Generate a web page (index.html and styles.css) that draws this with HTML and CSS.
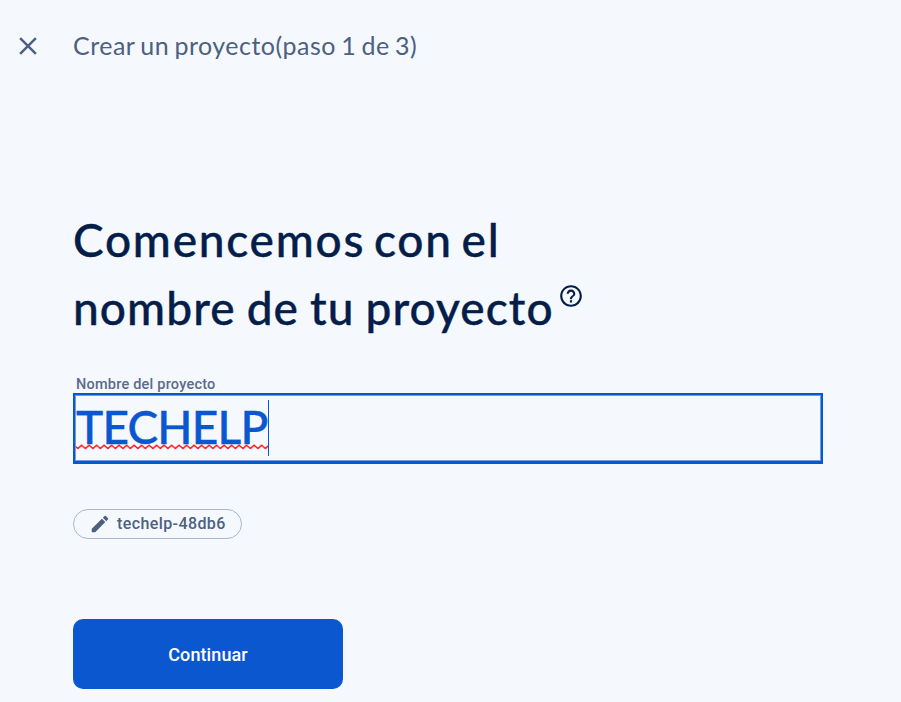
FILE: index.html
```html
<!DOCTYPE html>
<html lang="es">
<head>
<meta charset="utf-8">
<title>Crear un proyecto</title>
<link rel="stylesheet" href="styles.css">
</head>
<body>
<header class="topbar">
  <svg class="close" viewBox="0 0 24 24"><path d="M19 6.41 17.59 5 12 10.59 6.41 5 5 6.41 10.59 12 5 17.59 6.41 19 12 13.41 17.59 19 19 17.59 13.41 12z"/></svg>
  <span class="step">Crear un proyecto(paso 1 de 3)</span>
</header>
<main class="content">
  <h1 class="heading">
    <span class="line first">Comencemos con el</span>
    <span class="row"><span class="line second">nombre de tu proyecto</span>
    <svg class="help" viewBox="0 0 24 24"><path d="M11 18h2v-2h-2zm1-16C6.48 2 2 6.48 2 12s4.480 10 10 10 10-4.480 10-10S17.520 2 12 2zm0 18c-4.410 0-8-3.590-8-8s3.590-8 8-8 8 3.590 8 8-3.590 8-8 8zm0-14c-2.210 0-4 1.790-4 4h2c0-1.100.9-2 2-2s2 .9 2 2c0 2-3 1.750-3 5h2c0-2.250 3-2.500 3-5 0-2.210-1.790-4-4-4z"/></svg></span>
  </h1>
  <div class="label">Nombre del proyecto</div>
  <div class="field">
    <span class="value">TECHELP<svg class="wave" width="192" height="6"><defs><pattern id="w" width="7.5" height="6" patternUnits="userSpaceOnUse"><path d="M-1.875 1.250 1.875 4.500 5.625 1.250 9.375 4.500"/></pattern></defs><rect width="192" height="6" fill="url(#w)"/></svg></span>
    <span class="caret"></span>
  </div>
  <div class="chip">
    <svg class="pencil" viewBox="0 0 24 24"><path d="M3 17.250V21h3.750L17.810 9.940l-3.750-3.750zM20.710 7.040a1 1 0 0 0 0-1.410l-2.340-2.340a1 1 0 0 0-1.410 0l-1.830 1.830 3.750 3.750z"/></svg>
    <span>techelp-48db6</span>
  </div>
  <button class="primary">Continuar</button>
</main>
</body>
</html>
```
FILE: styles.css
```css
* { box-sizing: border-box; }
body { margin: 0; width: 901px; height: 702px; overflow: hidden; background: #f5f9fe; font-family: Roboto, sans-serif; }
svg { fill: currentColor; flex: none; }
.topbar { display: flex; align-items: center; height: 92px; padding-left: 13px; color: #4d6080; }
.close { width: 30px; height: 30px; margin-right: 30px; }
.step { padding-bottom: 1px; font: 400 25px/31px Lato, sans-serif; letter-spacing: .5px; word-spacing: -1.600px; white-space: nowrap; }
.content { display: flex; flex-direction: column; align-items: flex-start; padding: 114px 78px 0 73px; }
.heading { margin: 0; color: #041e49; font: 500 46px/68px Lato, sans-serif; -webkit-text-stroke: .4px currentColor; }
.line { display: block; white-space: nowrap; }
.first { letter-spacing: 1.750px; word-spacing: -4.500px; }
.second { letter-spacing: 1.100px; word-spacing: -1.800px; }
.row { display: flex; }
.help { width: 26px; height: 26px; margin: 9px 0 0 4px; }
.label { margin: 34px 0 0 3px; height: 17px; color: #5a6b8c; font: 500 14.500px/17px Roboto, sans-serif; letter-spacing: .22px; white-space: nowrap; }
.field { display: flex; align-items: center; width: 750px; height: 71px; padding: 1px; border: 2px solid #0b57d0; border-bottom-width: 3px; box-shadow: inset 0 0 0 1px #739de3; }
.value { position: relative; width: 192px; color: #0b57d0; font: 500 46px/56px Lato, sans-serif; letter-spacing: -.8px; white-space: nowrap; top: -1px; -webkit-text-stroke: .4px currentColor; }
.wave { position: absolute; left: 0; top: 45px; -webkit-text-stroke: 0; }
.wave path { fill: none; stroke: #f11; stroke-width: 1.500; }
.caret { width: 1px; height: 56px; background: #0b57d0; }
.chip { display: flex; align-items: center; width: 169px; height: 30px; margin-top: 45px; padding-left: 16px; border: 1px solid #a9b6ce; border-radius: 15px; color: #4d6080; font: 500 16px/28px Roboto, sans-serif; letter-spacing: .4px; white-space: nowrap; }
.pencil { width: 22px; height: 22px; margin: 0 5px 0 -1px; }
.chip span { margin-left: 1px; }
.primary { width: 270px; height: 70px; margin: 80px 0 0; padding: 2px 0 0; border: 0; border-radius: 10px; background: #0b57d0; color: #fff; font: 500 18px/24px Roboto, sans-serif; letter-spacing: .1px; }
```
